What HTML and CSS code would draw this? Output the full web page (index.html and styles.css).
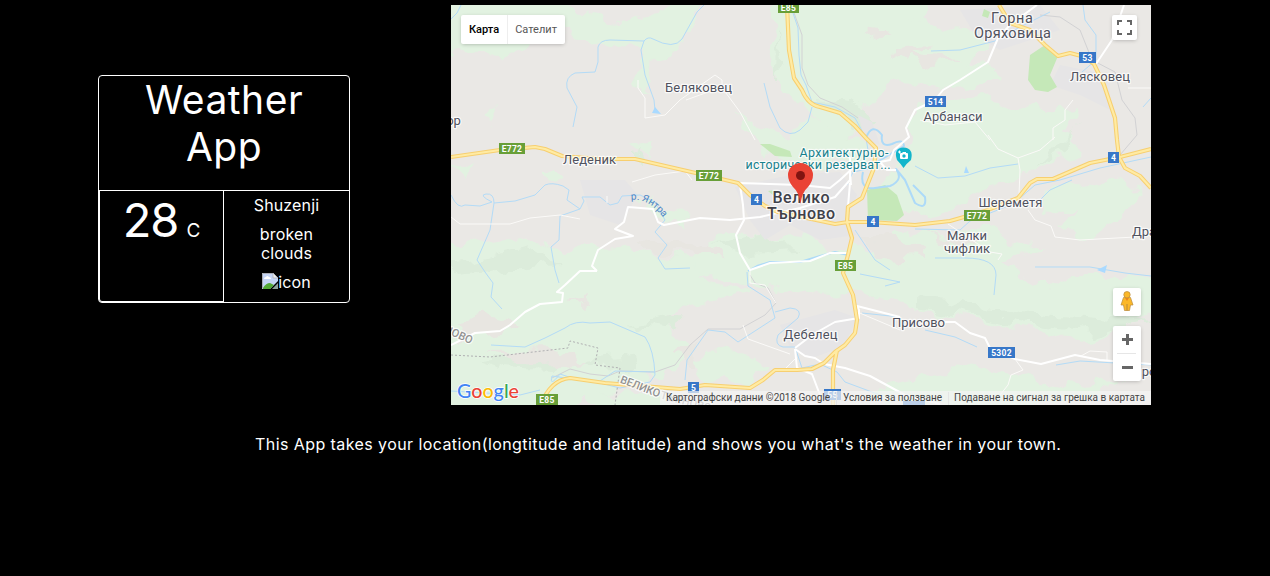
FILE: index.html
```html
<!DOCTYPE html>
<html lang="en">
<head>
<meta charset="utf-8">
<title>Weather App</title>
<link rel="stylesheet" href="styles.css">
</head>
<body>
<main class="top">
  <section class="card">
    <h1 class="title">Weather<br>App</h1>
    <div class="cells">
      <div class="temp"><span class="degrees">28</span><span class="unit">C</span></div>
      <div class="info">
        <p class="place">Shuzenji</p>
        <p class="sky">broken<br>clouds</p>
        <p class="picture"><svg class="broken" viewBox="0 0 16 16"><path d="M0 0H11L16 5V8L8 16H0Z" fill="#c5d5f5"/><path d="M.5 15.500V.5H11" fill="none" stroke="#a9adb5"/><path d="M2 6Q2 4 4 4Q5 2 7 4Q9 4 9 6Z" fill="#fff"/><path d="M1 15Q4 10 8 10L12 12L8 16H1Z" fill="#53a936"/><path d="M11 0L16 5H11Z" fill="#eee" stroke="#a9adb5" stroke-width=".7"/><path d="M16 10V16H10Z" fill="#8ea19a"/></svg><span>icon</span></p>
      </div>
    </div>
  </section>
  <section class="map">
    <svg class="terrain" viewBox="451 5 700 400">
      <defs>
        <filter id="rough" x="-5%" y="-5%" width="110%" height="110%"><feTurbulence type="fractalNoise" baseFrequency=".045" numOctaves="3" seed="4"/><feDisplacementMap in="SourceGraphic" scale="26" xChannelSelector="R" yChannelSelector="G"/></filter>
      </defs>
      <rect x="451" y="5" width="700" height="400" fill="#eae8e5"/>
      <g class="wood" filter="url(#rough)">
        <path d="M440 0H555L575 12L620 22L660 18L685 0H705L692 30L675 55L655 58L650 80L645 98L638 75L640 52L605 45L575 33L545 40L500 55L440 52Z"/>
        <path d="M775 0H930L925 25L945 35L985 45L970 58L990 70L975 85L940 88L905 80L880 90L872 105L850 112L865 128L850 135L810 118L790 90L770 70L765 45L775 25Z"/>
        <path d="M900 20L960 30L990 45L965 60L990 75L1000 85L950 85L900 60Z"/>
        <path d="M915 110L980 95L1010 105L1050 112L1078 108L1065 130L1085 150L1060 160L1020 175L985 190L950 210L920 218L890 205L885 180L905 155Z"/>
        <path d="M900 228L950 235L990 225L1010 240L1050 250L1000 260L1040 285L1080 275L1160 275V310L1095 340L1040 332L980 320L910 308L870 300L855 280Z"/>
        <path d="M1045 190L1120 178L1145 200L1110 225L1090 238L1060 225L1080 208L1040 210Z"/>
        <path d="M735 110L760 125L790 135L805 118L860 135L870 155L850 170L835 160L810 170L790 160L760 150Z"/>
        <path d="M440 245L520 238L560 248L620 246L690 262L740 270L700 278L755 290L690 305L665 320L690 345L670 372L640 382L600 392L570 410H440Z"/>
        <path d="M720 232L800 240L845 250L900 245L910 270L990 290L940 305L850 295L790 292L720 278L690 262Z"/>
        <path d="M690 355L735 350L765 365L745 384L695 380Z"/>
        <path d="M590 390L660 395L680 410H590ZM870 400L900 382L975 365L1025 375L1060 385L1120 382L1080 400L980 408Z"/>
        <path d="M640 200L680 210L690 225L665 222ZM480 115L500 105L492 128ZM451 165L472 163L465 180ZM540 170L558 167L565 178L545 182ZM630 148L650 143L650 155Z"/>
      </g>
      <g filter="url(#rough)">
        <path class="shade" d="M775 30L782 70L774 82ZM630 160L644 150L640 162ZM815 100L850 105L875 120L860 130ZM1040 165L1060 145L1075 130L1062 155ZM451 265L535 248L560 265L460 276ZM480 361L555 354L550 370L500 368ZM585 359L635 355L640 368L600 370ZM920 298L1020 312L1150 322L1100 333L1020 324L920 308ZM710 243L770 235L800 250L740 252ZM625 325L685 315L680 330Z"/>
        <path class="soil" d="M451 320L490 314L525 322L500 334L460 340ZM485 352L550 350L590 360L520 364ZM670 350L700 345L690 365ZM565 301L590 298L580 304ZM635 240L700 245L720 258L650 252ZM860 30L890 33L875 40ZM890 50L930 45L910 62ZM930 235L990 238L960 246ZM860 235L900 238L930 260L875 258ZM910 55L960 60L935 68Z"/>
      </g>
      <path class="urban" d="M735 187L790 175L840 172L857 195L846 220L856 235L820 240L790 225L765 240L750 220ZM780 325L835 310L858 318L843 347L812 358L790 347ZM1060 65L1110 75L1110 110L1080 95L1050 85ZM960 10L1040 5L1060 30L1000 50L975 35ZM580 180L625 180L638 195L620 225L590 215ZM858 115L872 122L880 145L866 142Z"/>
      <path class="park" d="M1045 45L1058 56L1050 75L1057 87L1048 92L1035 90L1028 80L1030 55ZM867 190L885 185L897 195L904 215L897 221L868 220ZM984 9L990 12L988 18L982 16ZM760 144L770 144L790 151L792 157L775 156ZM768 191L776 190L774 196Z"/>
      <g class="rail">
        <path d="M552 378L570 369L590 374L608 376L620 371L655 372L675 365L690 345L708 329L740 329L765 315L776 303L768 288L755 283L750 275"/>
        <path d="M793 10L802 35L802 68L808 85L820 98L842 107L858 118M1040 15L1060 17L1080 30L1088 50L1092 60L1115 72L1122 100L1135 118L1137 135L1120 155"/>
      </g>
      <g class="river">
        <path d="M461 5L457 13L451 19M573 127L577 107L567 88Q565 77 575 73L595 72L598 62V47Q600 40 610 40L644 41Q648 36 653 39Q674 50 682 39L697 12L704 5M644 41L641 50L645 75L654 100L655 110"/>
        <path d="M764 83L770 107L780 128Q790 138 800 130L808 122L812 107M793 13L798 28L799 55L801 75L806 85L812 102L835 107L855 118L866 138L868 150L862 170"/>
        <path d="M931 51L960 50L995 41L1020 27L1050 12M1083 5L1085 20L1096 35V60L1082 72M1151 98L1143 107"/>
        <path d="M451 195Q458 210 465 205L480 206L492 202Q478 195 486 194T494 203L515 201L535 195L545 185Q552 182 563 186L569 190L567 200L580 209L560 216L559 240L551 247L555 270L559 283M494 203L490 230L477 260L485 272L493 283L491 297L502 309"/>
        <path d="M580 209L584 201L582 197H600L610 205L618 203L622 196L640 195L655 202L665 220L655 232L667 245L658 258L665 269L690 268M1035 267H1090L1125 273L1151 276"/>
        <path d="M915 166L938 178L965 176L990 168L1018 164M1020 198L1035 185L1060 180L1100 168L1151 157M1040 200L1050 190L1072 180M847 185L853 172L873 168M915 229L960 230L970 221L1018 202M935 258H965Q996 258 996 275L994 295"/>
        <path d="M491 345L525 347L545 338L565 328Q575 320 590 323L610 322L645 337Q654 350 655 375L650 382L620 388L600 383L552 376Q549 388 560 374L575 379L600 381L615 371L655 372M451 391L520 395L540 390"/>
        <path d="M685 380L687 360L708 330L725 332L738 342L775 318L770 300L748 286L747 272M775 312L790 308Q803 309 798 318L778 335Q774 345 783 347L795 347L802 368L820 364L837 372L845 382L880 395M862 313L900 317M925 330L955 337L977 347M1056 365L1080 361L1151 365M860 274L900 282L885 286M855 230L875 260L890 270"/>
      </g>
      <path d="M652 113L655 107L661 114ZM1097 270L1107 265L1105 273ZM964 173L966 166L969 173Z" fill="#aadaff"/>
      <path class="wide-river" d="M748 271L757 266L770 262H800L820 256L835 252L848 255M866 138Q872 122 882 135Q880 148 892 144Q903 138 904 146L894 152L877 162M863 172Q859 190 875 188L890 186Q904 180 896 169L905 180L915 203Q927 211 925 197L913 185"/>
      <path class="border" d="M451 355L490 357L568 348L570 341L598 348L595 365L620 368L615 405"/>
      <g class="lane">
        <path d="M638 80V88L645 98V118L665 115L680 100L715 75L722 80V87L686 100M726 93L740 112L755 140M451 217L460 224H510L530 218L560 215L580 219M632 182L655 175L685 171L692 180M988 135L998 149L1018 158L1020 170L1019 195M1018 158L1040 150L1055 137M1028 210L1035 220L1051 226L1055 237L1080 240L1135 237M743 325L748 339L790 354M785 369L795 359M750 270L750 283L765 285L776 303M1015 359L1023 370L1011 375L1008 385L1000 395M855 311L900 330M948 224L990 252L1002 254L998 260M920 120L945 125L975 122L990 140M1073 100L1065 110L1065 120L1053 128V140M1128 88H1151M1081 356L1090 351L1107 352V360M607 203V196"/>
      </g>
      <g class="street">
        <path d="M597 271H580L565 285L557 292L563 293L562 302L540 304L525 312L510 325L500 331L475 333L451 345M597 271L592 266L598 250L615 239L633 236L615 229L624 222L628 207L653 209L658 222L664 225L700 218L730 220L760 217L800 208L835 197L850 180V158L841 151"/>
        <path d="M738 183L800 185L830 188L840 180L855 166L880 162L890 160L894 150L909 137L906 128L915 110L935 100L943 90L960 80L988 62L998 38L1010 25L1037 5M1124 5L1112 40L1096 64M740 185L743 205L744 220L736 235L740 253L750 270L770 263L810 261L830 253H848M850 183L848 206M850 172L851 185M880 162L887 170L896 170"/>
        <path d="M795 349L797 368L812 374L820 395M795 349L805 356L815 358L824 364L845 368L870 376L905 395L940 404M795 348L812 335L835 322L859 318V310L857 306L900 317M945 322L955 322L970 333L985 338L990 348L1015 359L1041 364L1075 355L1100 360L1151 364"/>
      </g>
      <g class="highway-edge"><path d="M787 5L789 50L794 78L802 90Q808 105 820 107L840 113L855 126L866 138L876 148L874 168L866 188L862 198L848 207L847 222L852 238L848 255L843 273L853 295L857 320L855 333L845 345L835 352L824 363L812 369L797 370H775L763 380L750 388L735 387L705 385L680 389L605 383L570 378Q550 380 541 405M837 350L833 370V405M451 157L500 150L535 147L545 149L562 156L600 159H635L700 174L738 183L750 195L765 206L778 212L835 224L848 222H870L915 225L950 221L985 211L1018 198L1030 183L1037 179H1053L1090 163L1120 157L1151 149M999 5L1010 23L1030 30L1045 45L1058 56L1070 53L1085 57L1094 64L1104 85L1115 118L1117 140L1119 157L1125 168L1140 176L1151 188"/></g>
      <g class="highway"><path d="M787 5L789 50L794 78L802 90Q808 105 820 107L840 113L855 126L866 138L876 148L874 168L866 188L862 198L848 207L847 222L852 238L848 255L843 273L853 295L857 320L855 333L845 345L835 352L824 363L812 369L797 370H775L763 380L750 388L735 387L705 385L680 389L605 383L570 378Q550 380 541 405M837 350L833 370V405M451 157L500 150L535 147L545 149L562 156L600 159H635L700 174L738 183L750 195L765 206L778 212L835 224L848 222H870L915 225L950 221L985 211L1018 198L1030 183L1037 179H1053L1090 163L1120 157L1151 149M999 5L1010 23L1030 30L1045 45L1058 56L1070 53L1085 57L1094 64L1104 85L1115 118L1117 140L1119 157L1125 168L1140 176L1151 188"/></g>
      <g class="green"><rect x="778" y="1" width="21" height="12"/><rect x="499" y="143" width="26" height="11"/><rect x="696" y="170" width="26" height="11"/><rect x="964" y="210" width="26" height="11"/><rect x="835" y="260" width="21" height="11"/><rect x="536" y="394" width="22" height="11"/></g>
      <g class="blue"><rect x="1079" y="52" width="17" height="11"/><rect x="925" y="96" width="21" height="11"/><rect x="1108" y="152" width="11" height="11"/><rect x="751" y="194" width="11" height="11"/><rect x="867" y="216" width="12" height="11"/><rect x="988" y="347" width="27" height="11"/><rect x="688" y="382" width="11" height="11"/><rect x="824" y="389" width="17" height="11"/><rect x="903" y="401" width="22" height="8"/></g>
      <g class="shield-text"><text x="788.5" y="11">E85</text><text x="512" y="152">E772</text><text x="709" y="179">E772</text><text x="977" y="219">E772</text><text x="845.5" y="269">E85</text><text x="547" y="403">E85</text><text x="1087.5" y="61">53</text><text x="935.5" y="105">514</text><text x="1113.5" y="161">4</text><text x="756.5" y="203">4</text><text x="873" y="225">4</text><text x="1001.5" y="356">5302</text><text x="693.5" y="391">5</text><text x="832.5" y="398">55</text></g>
      <g class="label">
        <text x="698.5" y="92" textLength="67">Беляковец</text><text x="589.5" y="164" textLength="53">Леденик</text><text x="953" y="121" textLength="59">Арбанаси</text><text x="1100" y="81" textLength="60">Лясковец</text><text x="1010.5" y="207" textLength="64">Шереметя</text><text x="967" y="240" textLength="40">Малки</text><text x="967" y="253" textLength="46">чифлик</text><text x="810.5" y="339" textLength="54">Дебелец</text><text x="918.5" y="327" textLength="53">Присово</text><text x="453.5" y="125">ор</text><text x="1144" y="236">Дра</text><text x="1149" y="376">ро</text>
        <g class="town"><text x="1012" y="23" textLength="42">Горна</text><text x="1012.5" y="38" textLength="77">Оряховица</text></g>
        <g class="city"><text x="801" y="203" textLength="57">Велико</text><text x="801" y="219" textLength="68">Търново</text></g>
        <g class="heritage"><text x="844" y="157" textLength="89">Архитектурно-</text><text x="818" y="169" textLength="145">исторически резерват...</text></g>
        <g class="region"><text x="457" y="338" transform="rotate(24 457 338)">НОВО</text><text x="639" y="390" transform="rotate(21 639 390)" textLength="42">ВЕЛИКО</text><text x="685" y="405" transform="rotate(15 685 405)">ТЪРНОВО</text></g>
      </g>
      <path id="yantra" d="M631 200Q650 197 668 224" fill="none"/>
      <text class="stream"><textPath href="#yantra">р. Янтра</textPath></text>
      <path d="M903.5 168Q900 163 897 160Q893 148 903.5 147.500Q914 148 911 160Q907 163 903.5 168Z" fill="#12b5cb"/>
      <rect x="900" y="153" width="8" height="6" rx="1" fill="#fff"/><path d="M902.500 152.500H906M898 152H901M899.500 150.500V153.500" stroke="#fff"/><circle cx="904" cy="156" r="1.700" fill="#12b5cb"/>
      <path d="M800.5 204Q799 192 793 187Q788 181 788 175A12.500 12 0 0 1 813 175Q813 181 808 187Q802 192 800.5 204Z" fill="#ea4335"/><circle cx="800.5" cy="175.500" r="4.500" fill="#811411"/>
      <rect x="660" y="391" width="491" height="14" fill="#f5f5f5" opacity=".7"/>
      <text class="google" x="457" y="398" textLength="62" lengthAdjust="spacingAndGlyphs"><tspan fill="#4285f4">G</tspan><tspan fill="#ea4335">o</tspan><tspan fill="#fbbc05">o</tspan><tspan fill="#4285f4">g</tspan><tspan fill="#34a853">l</tspan><tspan fill="#ea4335">e</tspan></text>
      <g class="legal"><text x="666" y="401" textLength="164">Картографски данни ©2018 Google</text><text x="843" y="401" textLength="99">Условия за ползване</text><text x="954" y="401" textLength="191">Подаване на сигнал за грешка в картата</text></g>
      <path d="M836.5 392V405M948.5 392V405" stroke="#e5e5e5"/>
    </svg>
    <div class="kinds"><span class="kind active">Карта</span><span class="kind">Сателит</span></div>
    <div class="control full"><svg viewBox="0 0 25 25" width="25" height="25"><path d="M6 10V6H10M15 6H19V10M19 15V19H15M10 19H6V15" fill="none" stroke="#666" stroke-width="2"/></svg></div>
    <div class="control pegman"><svg viewBox="0 0 28 28" width="28" height="28"><path d="M10.500 9.500H17.500L20 17L17.500 17L16.500 22.500H11.500L10.500 17L8 17Z" fill="#fbb829" stroke="#b98a3d" stroke-width=".7"/><circle cx="14" cy="6.700" r="3.200" fill="#fbb829" stroke="#b98a3d" stroke-width=".7"/><path d="M12 10L14 13L16 10Z" fill="#e88820"/><path d="M14 16V22.500" stroke="#b98a3d"/></svg></div>
    <div class="control zoom"><svg viewBox="0 0 28 55" width="28" height="55"><path d="M9 13.500H20M14.500 8V19M9 41.500H20" stroke="#666" stroke-width="3"/><path d="M4 27.500H23" stroke="#e6e6e6"/></svg></div>
  </section>
</main>
<p class="about">This App takes your location(longtitude and latitude) and shows you what's the weather in your town.</p>
</body>
</html>
```
FILE: styles.css
```css
* { box-sizing: border-box; }
body { margin: 0; background: #000; color: #fff; font: 16px/19px Inter, "Noto Sans", sans-serif; overflow: hidden; }
h1, p { margin: 0; }
.top { display: flex; align-items: flex-start; padding: 5px 0 0 98px; gap: 101px; }
.card { width: 252px; height: 228px; margin-top: 70px; border: 1px solid #fff; border-radius: 4px; text-align: center; }
.title { height: 114px; font-size: 39px; line-height: 47px; font-weight: 400; letter-spacing: .5px; }
.cells { display: flex; height: 112px; border-top: 1px solid #fff; }
.temp { width: 125px; border: 1px solid #fff; border-top: 0; border-bottom-left-radius: 3px; line-height: 58px; }
.degrees { font-size: 47px; letter-spacing: -1px; margin-right: 8px; }
.unit { font-size: 19px; }
.info { flex: 1; padding-top: 5px; letter-spacing: .15px; }
.info p { margin-bottom: 10px; }
.picture { display: flex; justify-content: center; }
.broken { width: 16px; height: 16px; }
.map { position: relative; width: 700px; height: 400px; overflow: hidden; font-family: Roboto, sans-serif; }
.terrain { display: block; width: 700px; height: 400px; }
.wood { fill: #e2f2e1; }
.shade { fill: #dcecdb; }
.soil { fill: #e8e6e1; }
.urban { fill: #e6e5e6; }
.park { fill: #c5e8b8; }
.rail, .river, .wide-river, .border, .lane, .street, .highway, .highway-edge { fill: none; stroke-linejoin: round; }
.rail { stroke: #d2d2d4; }
.river { stroke: #b3dbf7; stroke-width: 1; }
.wide-river { stroke: #addaf8; stroke-width: 2; }
.border { stroke: #b0b0b2; stroke-dasharray: 2 2; }
.lane { stroke: #fbfaf8; stroke-width: 1; }
.street { stroke: #fff; stroke-width: 2; }
.highway-edge { stroke: #f7cf70; stroke-width: 4.2; }
.highway { stroke: #ffeba3; stroke-width: 2.2; }
.green { fill: #689f38; }
.blue { fill: #3777c8; }
.shield-text { font: 700 8.5px Roboto, sans-serif; fill: #fff; text-anchor: middle; letter-spacing: .3px; }
.label { font-size: 13px; fill: #50525e; text-anchor: middle; stroke: #fff; stroke-width: 2.5px; stroke-opacity: .75; paint-order: stroke; stroke-linejoin: round; }
.town { font-size: 14.5px; }
.city { font-size: 16px; font-weight: 500; fill: #404149; }
.heritage { font-size: 12.5px; fill: #17818d; }
.region { font-size: 11px; font-weight: 500; fill: #929292; }
.stream { font-size: 10px; fill: #4d84c4; }
.google { font: 500 20px Lato, sans-serif; paint-order: stroke; stroke: #fff; stroke-width: 1.5px; }
.legal { font-size: 10px; fill: #444; }
.kinds, .control { position: absolute; background: #fff; border-radius: 2px; box-shadow: 0 1px 4px -1px rgba(0, 0, 0, .3); }
.kinds { left: 10px; top: 10px; width: 104px; height: 29px; display: flex; font-size: 11px; line-height: 29px; color: #565656; }
.kind { padding: 0 8px; }
.kind + .kind { flex: 1; padding: 0 7px; border-left: 1px solid #eee; }
.active { color: #000; font-weight: 500; }
.control svg { display: block; }
.full { left: 661px; top: 10px; }
.pegman { left: 662px; top: 283px; }
.zoom { left: 662px; top: 321px; }
.about { margin: 30px 0 0 255px; white-space: nowrap; letter-spacing: .42px; }
```
